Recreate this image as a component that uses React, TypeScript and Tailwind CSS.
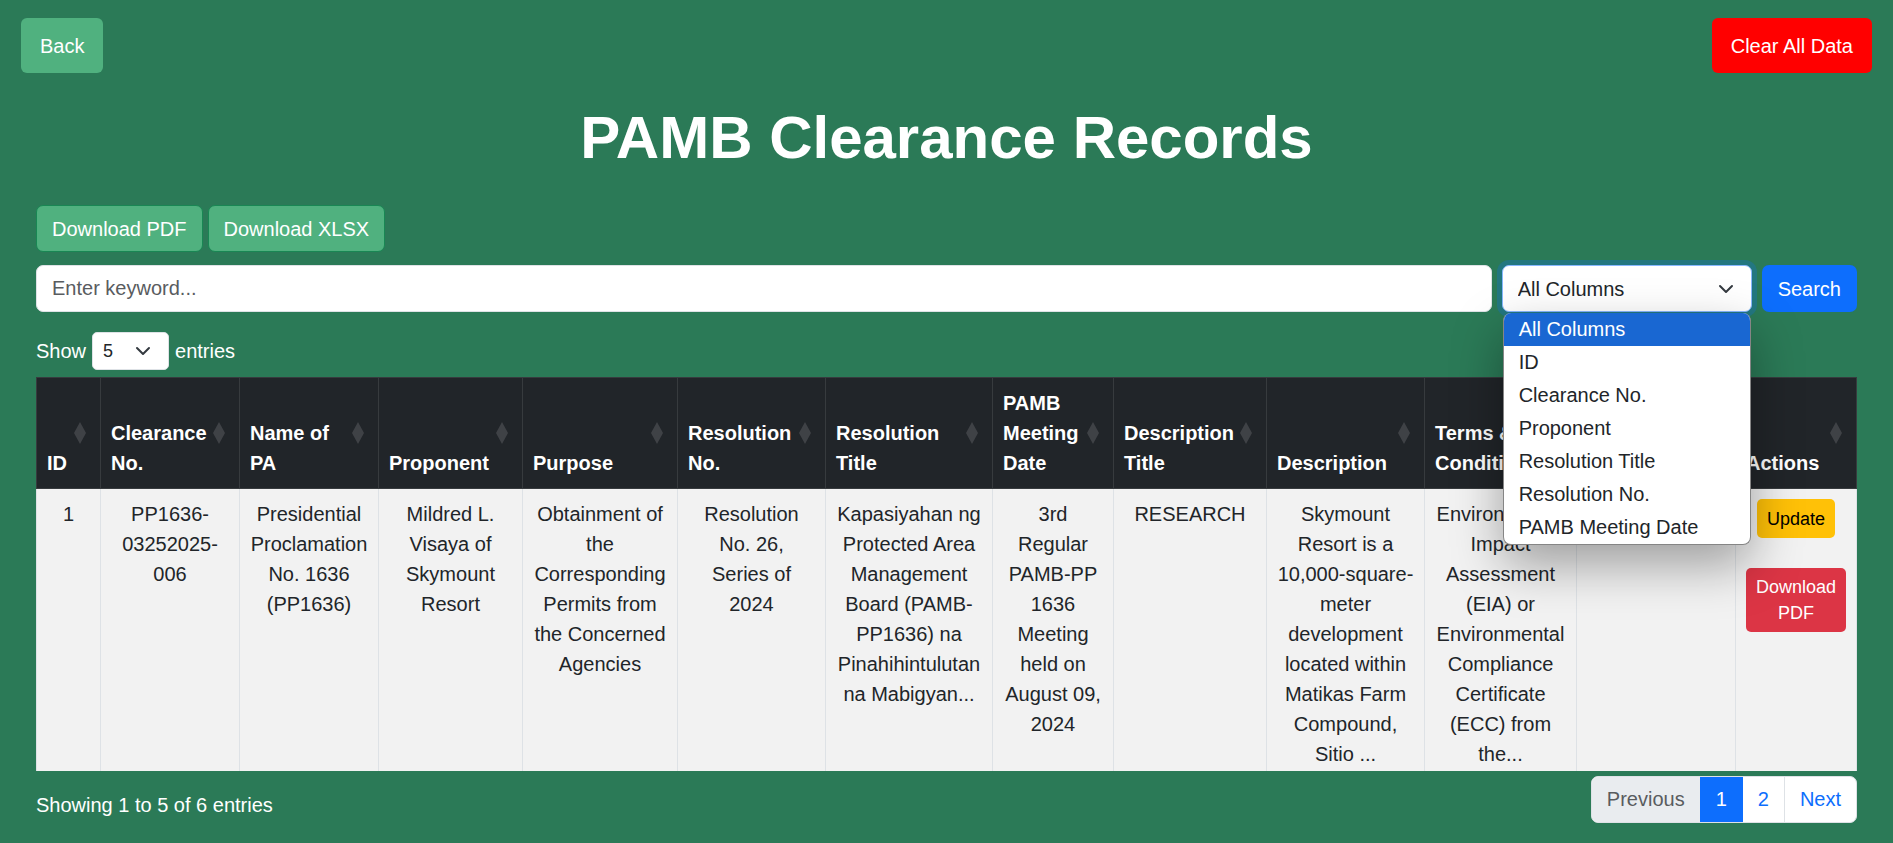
import { useId, type ReactNode } from "react";

const columns: { label: string; width: string }[] = [
  { label: "ID", width: "w-[65px]" },
  { label: "Clearance No.", width: "w-[139px]" },
  { label: "Name of PA", width: "w-[139px]" },
  { label: "Proponent", width: "w-[144px]" },
  { label: "Purpose", width: "w-[155px]" },
  { label: "Resolution No.", width: "w-[148px]" },
  { label: "Resolution Title", width: "w-[167px]" },
  { label: "PAMB Meeting Date", width: "w-[121px]" },
  { label: "Description Title", width: "w-[153px]" },
  { label: "Description", width: "w-[158px]" },
  { label: "Terms & Conditions", width: "w-[152px]" },
  { label: "", width: "w-[159px]" },
  { label: "Actions", width: "w-[121px]" },
];

const record = [
  "1",
  "PP1636-03252025-006",
  "Presidential Proclamation No. 1636 (PP1636)",
  "Mildred L. Visaya of Skymount Resort",
  "Obtainment of the Corresponding Permits from the Concerned Agencies",
  "Resolution No. 26, Series\u00a0of 2024",
  "Kapasiyahan ng Protected Area Management Board (PAMB-PP1636) na Pinahihintulutan na Mabigyan...",
  "3rd Regular PAMB-PP 1636 Meeting held on August 09, 2024",
  "RESEARCH",
  "Skymount Resort is a 10,000-square-meter development located within Matikas Farm Compound, Sitio ...",
  "Environmental Impact Assessment (EIA) or Environmental Compliance Certificate (ECC) from the...",
  "",
];

const searchColumns = [
  "All Columns",
  "ID",
  "Clearance No.",
  "Proponent",
  "Resolution Title",
  "Resolution No.",
  "PAMB Meeting Date",
];

function Chevron({ className }: { className: string }) {
  return (
    <svg
      viewBox="0 0 16 16"
      className={`pointer-events-none absolute top-1/2 -translate-y-1/2 ${className}`}
      fill="none"
      stroke="#343a40"
      strokeWidth="2"
      strokeLinecap="round"
      strokeLinejoin="round"
      aria-hidden="true"
    >
      <path d="m2 5 6 6 6-6" />
    </svg>
  );
}

function SortIcon() {
  return (
    <svg
      viewBox="0 0 12 22"
      className="absolute top-1/2 right-[14px] h-[22px] w-3 -translate-y-1/2 fill-[#3f4246]"
      aria-hidden="true"
    >
      <path d="M6 0 12 11 6 22 0 11z" />
    </svg>
  );
}

function ExportButton({ children }: { children: ReactNode }) {
  return (
    <button
      type="button"
      className="h-[47px] rounded-[7px] border border-[#198754] bg-[#50b17f] px-[15px] text-white"
    >
      {children}
    </button>
  );
}

export default function App() {
  const keywordId = useId();
  const columnId = useId();
  const lengthId = useId();

  return (
    <div className="min-h-screen bg-[#2b7a57] font-['Liberation_Sans',Arial,sans-serif] text-[20px] leading-[30px] text-[#212529]">
      <header className="flex justify-between px-[21px] pt-[18px]">
        <button type="button" className="h-[55px] rounded-[6px] bg-[#50b17f] px-[19px] text-white">
          Back
        </button>
        <button type="button" className="h-[55px] rounded-[6px] bg-[#ff0000] px-[19px] text-white">
          Clear All Data
        </button>
      </header>

      <main className="px-9">
        <h1 className="mt-[29px] text-center text-[60px] leading-[72px] font-bold text-white">
          PAMB Clearance Records
        </h1>

        <div className="mt-[31px] flex gap-[5px]">
          <ExportButton>Download PDF</ExportButton>
          <ExportButton>Download XLSX</ExportButton>
        </div>

        <form className="mt-[13px] flex gap-[10px]" onSubmit={(e) => e.preventDefault()}>
          <label htmlFor={keywordId} className="sr-only">Keyword</label>
          <input
            id={keywordId}
            type="text"
            placeholder="Enter keyword..."
            className="h-[47px] min-w-0 flex-1 rounded-[7px] border border-[#dee2e6] bg-white px-[15px] placeholder:text-[#595c5f]"
          />
          <div className="relative w-[250px]">
            <label htmlFor={columnId} className="sr-only">Column</label>
            <select
              id={columnId}
              className="block h-[47px] w-full appearance-none rounded-[7px] border border-[#86b7fe] bg-white px-[15px] shadow-[0_0_0_5px_rgba(13,110,253,0.25)] outline-none"
            >
              {searchColumns.map((name) => (
                <option key={name}>{name}</option>
              ))}
            </select>
            <Chevron className="right-[18px] size-4" />
            <ul className="absolute top-[48px] left-px z-10 w-[248px] overflow-hidden rounded-[8px] border border-t-0 border-[#858585] bg-white leading-[32px] shadow-[0_20px_50px_rgba(0,0,0,0.35)]">
              {searchColumns.map((name, i) => (
                <li
                  key={name}
                  className={
                    i === 0
                      ? "h-[33px] bg-[#1967d2] px-[15px] text-white"
                      : "h-[33px] px-[15px]"
                  }
                >
                  {name}
                </li>
              ))}
            </ul>
          </div>
          <button type="submit" className="h-[47px] rounded-[7px] bg-[#0d6efd] px-4 text-white">
            Search
          </button>
        </form>

        <div className="mt-5 flex items-center text-white">
          <label htmlFor={lengthId}>Show</label>
          <div className="relative mx-[6px] w-[77px]">
            <select
              id={lengthId}
              className="block h-[38px] w-full appearance-none rounded-[5px] border border-[#dee2e6] bg-white px-[10px] text-[18px] text-[#212529]"
            >
              <option>5</option>
              <option>10</option>
            </select>
            <Chevron className="right-[18px] size-4" />
          </div>
          <span>entries</span>
        </div>

        <div className="mt-[7px] h-[calc(100vh-449px)] overflow-auto [scrollbar-width:none]">
          <table className="w-full table-fixed border-separate border-spacing-0">
            <thead>
              <tr>
                {columns.map(({ label, width }) => (
                  <th
                    key={label}
                    className={`relative border-y border-r border-[#373b3e] bg-[#212529] py-[10px] pr-8 pl-[10px] text-left align-bottom text-white first:border-l ${width}`}
                  >
                    {label}
                    <SortIcon />
                  </th>
                ))}
              </tr>
            </thead>
            <tbody>
              <tr>
                {record.map((text, i) => (
                  <td
                    key={i}
                    className="border-r border-b border-[#dee2e6] bg-[#f2f2f2] p-[10px] text-center align-top first:border-l"
                  >
                    {text}
                  </td>
                ))}
                <td className="border-r border-b border-[#dee2e6] bg-[#f2f2f2] p-[10px] align-top">
                  <div className="flex flex-col items-center gap-[30px] text-[18px] leading-[26px]">
                    <button type="button" className="h-[39px] rounded-[5px] bg-[#ffc107] px-[10px] text-black">
                      Update
                    </button>
                    <button type="button" className="w-full rounded-[5px] bg-[#dc3545] py-[6px] text-white">
                      Download PDF
                    </button>
                  </div>
                </td>
              </tr>
            </tbody>
          </table>
        </div>

        <footer className="flex items-start justify-between pt-[5px]">
          <p className="pt-[14px] text-white">Showing 1 to 5 of 6 entries</p>
          <nav
            aria-label="Pages"
            className="flex h-[47px] overflow-hidden rounded-[7px] border border-[#dee2e6] bg-white leading-[45px] text-[#0d6efd]"
          >
            <span className="bg-[#e9ecef] px-[15px] text-[#595c5f]">Previous</span>
            <a href="#1" aria-current="page" className="-my-px bg-[#0d6efd] px-4 pt-px text-white">1</a>
            <a href="#2" className="border-r border-[#dee2e6] px-[15px]">2</a>
            <a href="#2" className="px-[15px]">Next</a>
          </nav>
        </footer>
      </main>
    </div>
  );
}
